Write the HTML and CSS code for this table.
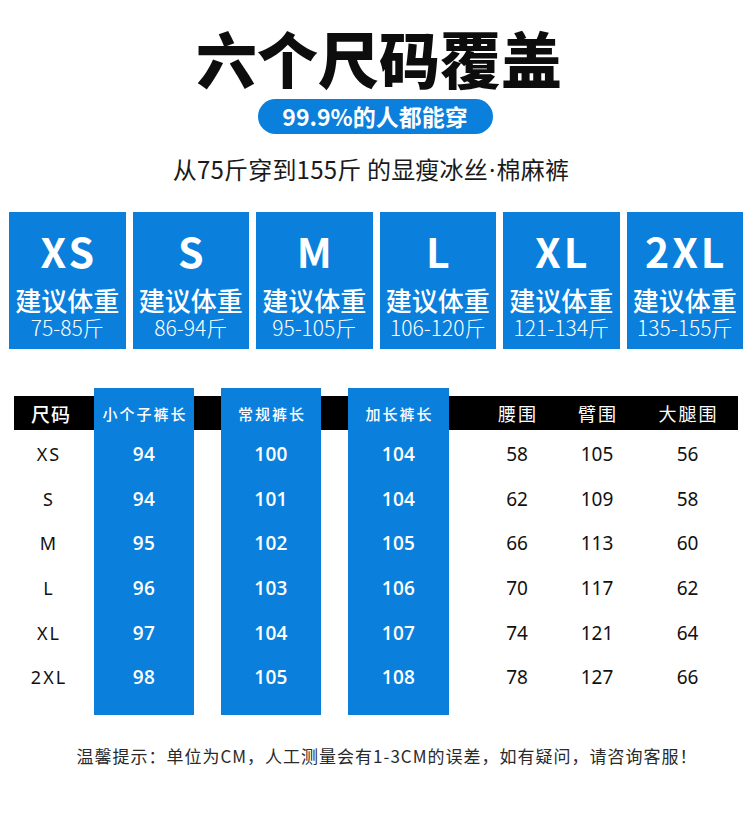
FILE: index.html
```html
<!DOCTYPE html>
<html lang="zh-CN">
<head>
<meta charset="utf-8">
<title>六个尺码覆盖</title>
<link rel="stylesheet" href="styles.css">
</head>
<body>
<div class="page">
  <h1 class="title">六个尺码覆盖</h1>
  <div class="pill">99.9%的人都能穿</div>
  <p class="subtitle">从75斤穿到155斤 的显瘦冰丝<span class="dot">·</span>棉麻裤</p>

  <div class="cards">
    <div class="card"><div class="size">XS</div><div class="label">建议体重</div><div class="range">75-85斤</div></div>
    <div class="card"><div class="size">S</div><div class="label">建议体重</div><div class="range">86-94斤</div></div>
    <div class="card"><div class="size">M</div><div class="label">建议体重</div><div class="range">95-105斤</div></div>
    <div class="card"><div class="size">L</div><div class="label">建议体重</div><div class="range">106-120斤</div></div>
    <div class="card"><div class="size">XL</div><div class="label">建议体重</div><div class="range">121-134斤</div></div>
    <div class="card"><div class="size">2XL</div><div class="label">建议体重</div><div class="range">135-155斤</div></div>
  </div>

  <div class="table">
    <div class="row strip-top"><div class="cell b1"></div><div class="cell b2"></div><div class="cell b3"></div></div>
    <div class="row head">
      <div class="cell sz hsz">尺码</div>
      <div class="cell b1 hb">小个子裤长</div>
      <div class="cell b2 hb">常规裤长</div>
      <div class="cell b3 hb">加长裤长</div>
      <div class="cell w hr">腰围</div>
      <div class="cell h hr">臂围</div>
      <div class="cell t hr">大腿围</div>
    </div>
    <div class="row strip-gap"><div class="cell b1"></div><div class="cell b2"></div><div class="cell b3"></div></div>
    <div class="row data"><div class="cell sz">XS</div><div class="cell b1">94</div><div class="cell b2">100</div><div class="cell b3">104</div><div class="cell w">58</div><div class="cell h">105</div><div class="cell t">56</div></div>
    <div class="row data"><div class="cell sz">S</div><div class="cell b1">94</div><div class="cell b2">101</div><div class="cell b3">104</div><div class="cell w">62</div><div class="cell h">109</div><div class="cell t">58</div></div>
    <div class="row data"><div class="cell sz">M</div><div class="cell b1">95</div><div class="cell b2">102</div><div class="cell b3">105</div><div class="cell w">66</div><div class="cell h">113</div><div class="cell t">60</div></div>
    <div class="row data"><div class="cell sz">L</div><div class="cell b1">96</div><div class="cell b2">103</div><div class="cell b3">106</div><div class="cell w">70</div><div class="cell h">117</div><div class="cell t">62</div></div>
    <div class="row data"><div class="cell sz">XL</div><div class="cell b1">97</div><div class="cell b2">104</div><div class="cell b3">107</div><div class="cell w">74</div><div class="cell h">121</div><div class="cell t">64</div></div>
    <div class="row data"><div class="cell sz">2XL</div><div class="cell b1">98</div><div class="cell b2">105</div><div class="cell b3">108</div><div class="cell w">78</div><div class="cell h">127</div><div class="cell t">66</div></div>
    <div class="row strip-bottom"><div class="cell b1"></div><div class="cell b2"></div><div class="cell b3"></div></div>
  </div>

  <p class="note">温馨提示：单位为CM，人工测量会有1-3CM的误差，如有疑问，请咨询客服！</p>
</div>
</body>
</html>
```

FILE: styles.css
```css
* { box-sizing: border-box; }
html, body { margin: 0; padding: 0; background: #fff; }
body {
  font-family: "Noto Sans CJK SC", "Noto Sans", sans-serif;
  color: #111;
}
.page {
  width: 750px;
  display: flex;
  flex-direction: column;
  align-items: center;
}
.title {
  margin: 28px 0 0 8px;
  font-size: 61px;
  line-height: 60px;
  font-weight: 900;
  color: #0d0d0d;
}
.pill {
  margin-top: 11px;
  width: 235px;
  height: 35px;
  border-radius: 18px;
  background: #0a80dc;
  color: #fff;
  font-size: 23px;
  font-weight: 700;
  line-height: 35px;
  text-align: center;
}
.subtitle {
  margin: 21px 0 0 -8px;
  font-size: 24px;
  line-height: 28px;
  font-weight: 400;
  letter-spacing: 0.2px;
  color: #1a1a1a;
}
.dot {
  font-family: "Noto Sans", sans-serif;
  padding: 0 1px;
}
.cards {
  margin-top: 28px;
  width: 750px;
  padding: 0 7px 0 9px;
  display: flex;
  gap: 7px;
}
.card {
  flex: 1;
  height: 137px;
  background: #0a80dc;
  color: #fff;
  display: flex;
  flex-direction: column;
  align-items: center;
}
.size {
  margin-top: 17px;
  font-size: 41px;
  line-height: 42px;
  font-weight: 700;
  letter-spacing: 3px;
  padding-left: 3px;
}
.label {
  margin-top: 16px;
  font-size: 26px;
  line-height: 26px;
  font-weight: 500;
}
.range {
  margin-top: 3px;
  font-size: 21px;
  line-height: 22px;
  font-weight: 300;
}
.table {
  margin-top: 39px;
  width: 750px;
  padding-left: 14px;
  display: flex;
  flex-direction: column;
}
.row {
  display: grid;
  grid-template-columns: 80px 100px 27px 100px 27px 101px 28px 80px 80px 101px;
  width: 724px;
}
.cell {
  display: flex;
  align-items: center;
  justify-content: center;
}
.sz { grid-column: 1; }
.b1 { grid-column: 2; }
.b2 { grid-column: 4; }
.b3 { grid-column: 6; }
.w { grid-column: 8; }
.h { grid-column: 9; }
.t { grid-column: 10; }
.b1, .b2, .b3 { background: #0a80dc; }

.strip-top { height: 8px; }
.strip-gap { height: 2px; }
.strip-bottom { height: 15px; }

.head {
  height: 34px;
  background: #000;
  color: #fff;
}
.hsz {
  font-size: 19px;
  font-weight: 500;
  letter-spacing: 1px;
  padding-right: 6px;
}
.hb {
  font-size: 15px;
  font-weight: 500;
  letter-spacing: 2px;
  padding-left: 2px;
}
.hr {
  font-size: 18px;
  font-weight: 400;
  letter-spacing: 2px;
  padding-left: 2px;
}
.data { height: 44.6px; }
.data .sz {
  font-family: "Noto Sans", sans-serif;
  font-size: 18px;
  letter-spacing: 2px;
  padding-right: 10px;
  color: #111;
}
.data .b1, .data .b2, .data .b3 {
  font-family: "Open Sans", sans-serif;
  font-size: 19px;
  font-weight: 600;
  letter-spacing: 0.3px;
  color: #fff;
}
.data .w, .data .h, .data .t {
  font-family: "Noto Sans", sans-serif;
  font-size: 19px;
  color: #111;
}
.note {
  margin: 27px 0 0 24px;
  font-size: 17px;
  line-height: 28px;
  letter-spacing: 1px;
  color: #2a2a2a;
}
```
